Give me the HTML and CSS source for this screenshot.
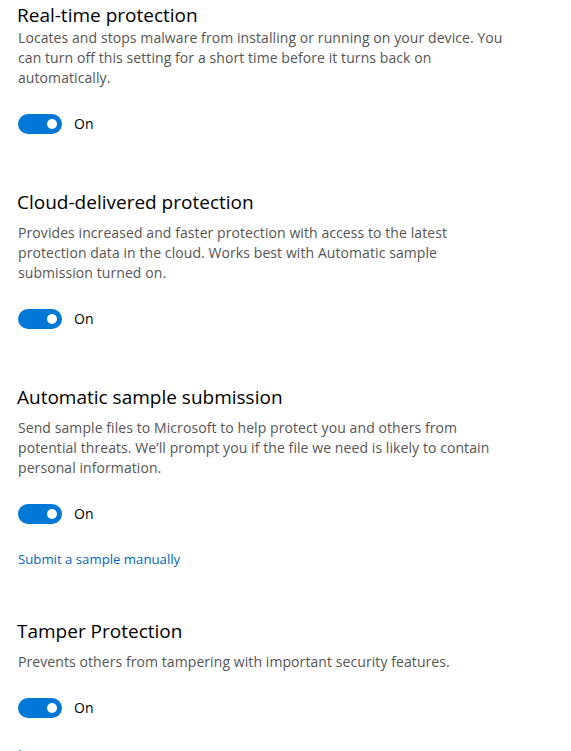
FILE: index.html
```html
<!DOCTYPE html>
<html lang="en">
<head>
<meta charset="utf-8">
<title>Virus &amp; threat protection settings</title>
<link rel="stylesheet" href="styles.css">
</head>
<body>
<main class="settings">
  <section class="setting setting--first">
    <h2 class="setting__title">Real-time protection</h2>
    <p class="setting__desc">Locates and stops malware from installing or running on your device. You can turn off this setting for a short time before it turns back on automatically.</p>
    <div class="toggle-row">
      <span class="toggle" role="switch" aria-checked="true"><span class="toggle__knob"></span></span>
      <span class="toggle-row__label">On</span>
    </div>
  </section>

  <section class="setting">
    <h2 class="setting__title">Cloud-delivered protection</h2>
    <p class="setting__desc">Provides increased and faster protection with access to the latest protection data in the cloud. Works best with Automatic sample submission turned on.</p>
    <div class="toggle-row">
      <span class="toggle" role="switch" aria-checked="true"><span class="toggle__knob"></span></span>
      <span class="toggle-row__label">On</span>
    </div>
  </section>

  <section class="setting">
    <h2 class="setting__title">Automatic sample submission</h2>
    <p class="setting__desc">Send sample files to Microsoft to help protect you and others from potential threats. We’ll prompt you if the file we need is likely to contain personal information.</p>
    <div class="toggle-row">
      <span class="toggle" role="switch" aria-checked="true"><span class="toggle__knob"></span></span>
      <span class="toggle-row__label">On</span>
    </div>
    <a class="setting__link" href="#">Submit a sample manually</a>
  </section>

  <section class="setting">
    <h2 class="setting__title">Tamper Protection</h2>
    <p class="setting__desc">Prevents others from tampering with important security features.</p>
    <div class="toggle-row">
      <span class="toggle" role="switch" aria-checked="true"><span class="toggle__knob"></span></span>
      <span class="toggle-row__label">On</span>
    </div>
    <a class="setting__link setting__link--last" href="#">Learn more</a>
  </section>
</main>
</body>
</html>
```
FILE: styles.css
```css
html, body {
  margin: 0;
  padding: 0;
  background: #ffffff;
}

body {
  font-family: "Open Sans", "Noto Sans", "Liberation Sans", sans-serif;
  color: #000000;
  overflow: hidden;
}

.settings {
  display: flex;
  flex-direction: column;
  gap: 55px;
  padding: 2px 0 0 17px;
  width: 494px;
}

.setting {
  display: flex;
  flex-direction: column;
  align-items: flex-start;
}

.setting__title {
  margin: 0 0 8px 0;
  font-size: 19px;
  font-weight: 400;
  line-height: 26px;
  color: #000;
}

.setting--first .setting__title {
  margin-bottom: 0;
}

.setting__desc {
  margin: 0 0 26px 1px;
  font-size: 14px;
  letter-spacing: 0.08px;
  line-height: 20px;
  color: #555555;
}

.toggle-row {
  display: flex;
  align-items: center;
  gap: 12px;
  margin-left: 1px;
  height: 20px;
}

.toggle {
  position: relative;
  width: 44px;
  height: 20px;
  border-radius: 10px;
  background: #0078d7;
  box-sizing: border-box;
}

.toggle__knob {
  position: absolute;
  top: 5px;
  right: 5px;
  width: 10px;
  height: 10px;
  border-radius: 50%;
  background: #ffffff;
}

.toggle-row__label {
  font-size: 14px;
  line-height: 20px;
  color: #000;
}

.setting__link {
  margin: 25px 0 -6px 1px;
  font-size: 13.2px;
  line-height: 20px;
  color: #0067c0;
  text-decoration: none;
}

.setting__link--last {
  margin-top: 26px;
}
```
